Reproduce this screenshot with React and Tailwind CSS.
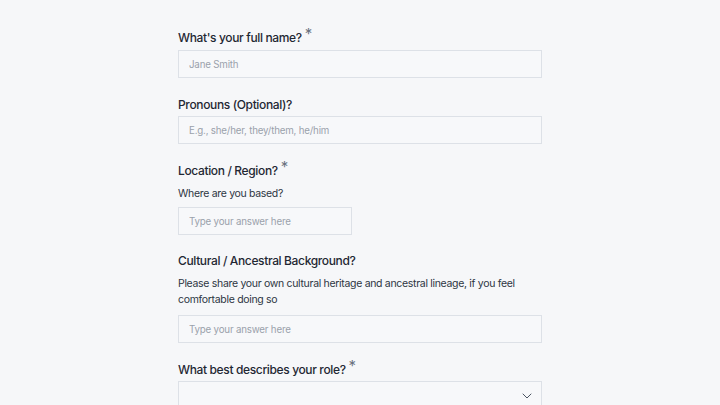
import { ChevronDown } from 'lucide-react'

function Label({ children, required }) {
  return (
    <label className="block text-[12px] leading-5 font-medium tracking-[-0.03em] text-[#1f2733]">
      {children}
      {required && <span className="ml-[3px] text-[15px] font-normal text-[#6b7280] relative -top-[3px]">*</span>}
    </label>
  )
}

function Hint({ children }) {
  return <p className="mt-[5px] text-[10.5px] leading-4 tracking-[-0.03em] text-[#2d3542]">{children}</p>
}

function Input({ placeholder, className = '' }) {
  return (
    <input
      type="text"
      placeholder={placeholder}
      className={`h-[28px] border border-[#dde1e7] bg-[#f7f8fa] px-[10px] text-[9.75px] tracking-[-0.02em] text-[#1f2733] placeholder:text-[#9aa1ab] outline-none ${className}`}
    />
  )
}

export default function App() {
  return (
    <div className="min-h-screen bg-[#f6f7f9] font-['Inter',sans-serif]">
      <div className="w-[364px] ml-[178px] pt-[27px] flex flex-col">
        <div>
          <Label required>What's your full name?</Label>
          <Input placeholder="Jane Smith" className="mt-[2px] w-full" />
        </div>

        <div className="mt-[17px]">
          <Label>Pronouns (Optional)?</Label>
          <Input placeholder="E.g., she/her, they/them, he/him" className="mt-[1px] w-full" />
        </div>

        <div className="mt-[16px]">
          <Label required>Location / Region?</Label>
          <Hint>Where are you based?</Hint>
          <Input placeholder="Type your answer here" className="mt-[5px] w-[174px]" />
        </div>

        <div className="mt-[16px]">
          <Label>Cultural / Ancestral Background?</Label>
          <Hint>Please share your own cultural heritage and ancestral lineage, if you feel comfortable doing so</Hint>
          <Input placeholder="Type your answer here" className="mt-[7px] w-full" />
        </div>

        <div className="mt-[16px]">
          <Label required>What best describes your role?</Label>
          <div className="mt-[1px] h-[30px] border border-[#dde1e7] bg-[#f7f8fa] flex items-center justify-end pr-[6px]">
            <ChevronDown className="w-[16px] h-[16px] text-[#4b5563]" strokeWidth={1.5} />
          </div>
        </div>
      </div>
    </div>
  )
}
